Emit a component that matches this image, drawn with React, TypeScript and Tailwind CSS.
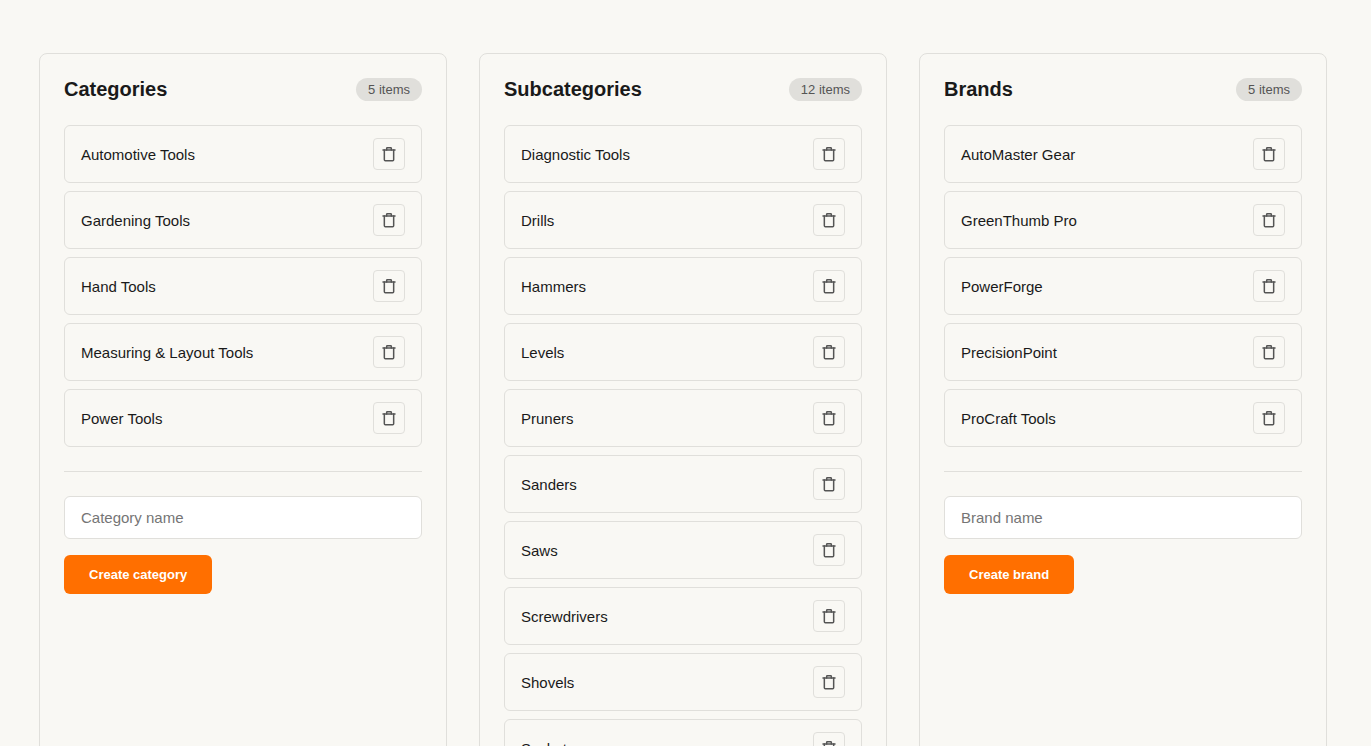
import React, { useState } from "react";

type PanelProps = {
  title: string;
  noun: string;
  initial: string[];
};

function TrashIcon() {
  return (
    <svg
      width="16"
      height="16"
      viewBox="0 0 16 16"
      fill="none"
      stroke="currentColor"
      strokeWidth="1.5"
      strokeLinecap="round"
      strokeLinejoin="round"
      aria-hidden="true"
    >
      <path d="M2 4h12" />
      <path d="M12.667 4v9.667a1 1 0 0 1-1 1H4.333a1 1 0 0 1-1-1V4" />
      <path d="M5.667 4V2.333a.667.667 0 0 1 .666-.666h3.334a.667.667 0 0 1 .666.666V4" />
    </svg>
  );
}

function Panel({ title, noun, initial }: PanelProps) {
  const [items, setItems] = useState(initial);
  const [name, setName] = useState("");
  const lower = noun.toLowerCase();

  const create = (event: React.FormEvent) => {
    event.preventDefault();
    const value = name.trim();
    if (value && !items.includes(value)) {
      setItems([...items, value].sort());
      setName("");
    }
  };

  return (
    <section className="rounded-lg border border-[#e0dfdb] p-6">
      <header className="mb-6 flex items-center justify-between">
        <h2 className="text-[20px] leading-[23px] font-bold">{title}</h2>
        <span className="rounded-full bg-[#e0dfdb] px-3 py-1 text-[13px] leading-[15px] text-[#555555]">
          {items.length} items
        </span>
      </header>

      <ul className="flex flex-col gap-2">
        {items.map((item) => (
          <li
            key={item}
            className="flex items-center justify-between rounded-md border border-[#e0dfdb] px-4 py-3"
          >
            <span className="text-[15px] leading-[17px]">{item}</span>
            <button
              type="button"
              aria-label={`Delete ${item}`}
              onClick={() => setItems(items.filter((other) => other !== item))}
              className="flex size-8 items-center justify-center rounded border border-[#e0dfdb] text-[#555555]"
            >
              <TrashIcon />
            </button>
          </li>
        ))}
      </ul>

      <form
        onSubmit={create}
        className="mt-6 flex flex-col items-start gap-4 border-t border-[#e0dfdb] pt-6"
      >
        <input
          type="text"
          aria-label={`${noun} name`}
          placeholder={`${noun} name`}
          value={name}
          onChange={(event) => setName(event.target.value)}
          className="w-full rounded-md border border-[#e0dfdb] bg-white px-4 py-3 text-[15px] leading-[17px] placeholder:text-[#757575]"
        />
        <button
          type="submit"
          className="rounded-md bg-[#ff6f00] px-[25px] py-3 text-[13px] leading-[15px] font-bold text-white"
        >
          Create {lower}
        </button>
      </form>
    </section>
  );
}

const panels: PanelProps[] = [
  {
    title: "Categories",
    noun: "Category",
    initial: [
      "Automotive Tools",
      "Gardening Tools",
      "Hand Tools",
      "Measuring & Layout Tools",
      "Power Tools",
    ],
  },
  {
    title: "Subcategories",
    noun: "Subcategory",
    initial: [
      "Diagnostic Tools",
      "Drills",
      "Hammers",
      "Levels",
      "Pruners",
      "Sanders",
      "Saws",
      "Screwdrivers",
      "Shovels",
      "Sockets",
      "Tape Measures",
      "Wrenches",
    ],
  },
  {
    title: "Brands",
    noun: "Brand",
    initial: [
      "AutoMaster Gear",
      "GreenThumb Pro",
      "PowerForge",
      "PrecisionPoint",
      "ProCraft Tools",
    ],
  },
];

export default function App() {
  return (
    <main className="min-h-screen bg-[#f9f8f4] pt-[53px] pr-[44px] pb-12 pl-[39px] font-['Liberation_Sans',Arial,sans-serif] text-[#1a1a1a]">
      <div className="grid grid-cols-3 gap-8">
        {panels.map((panel) => (
          <Panel key={panel.title} {...panel} />
        ))}
      </div>
    </main>
  );
}
